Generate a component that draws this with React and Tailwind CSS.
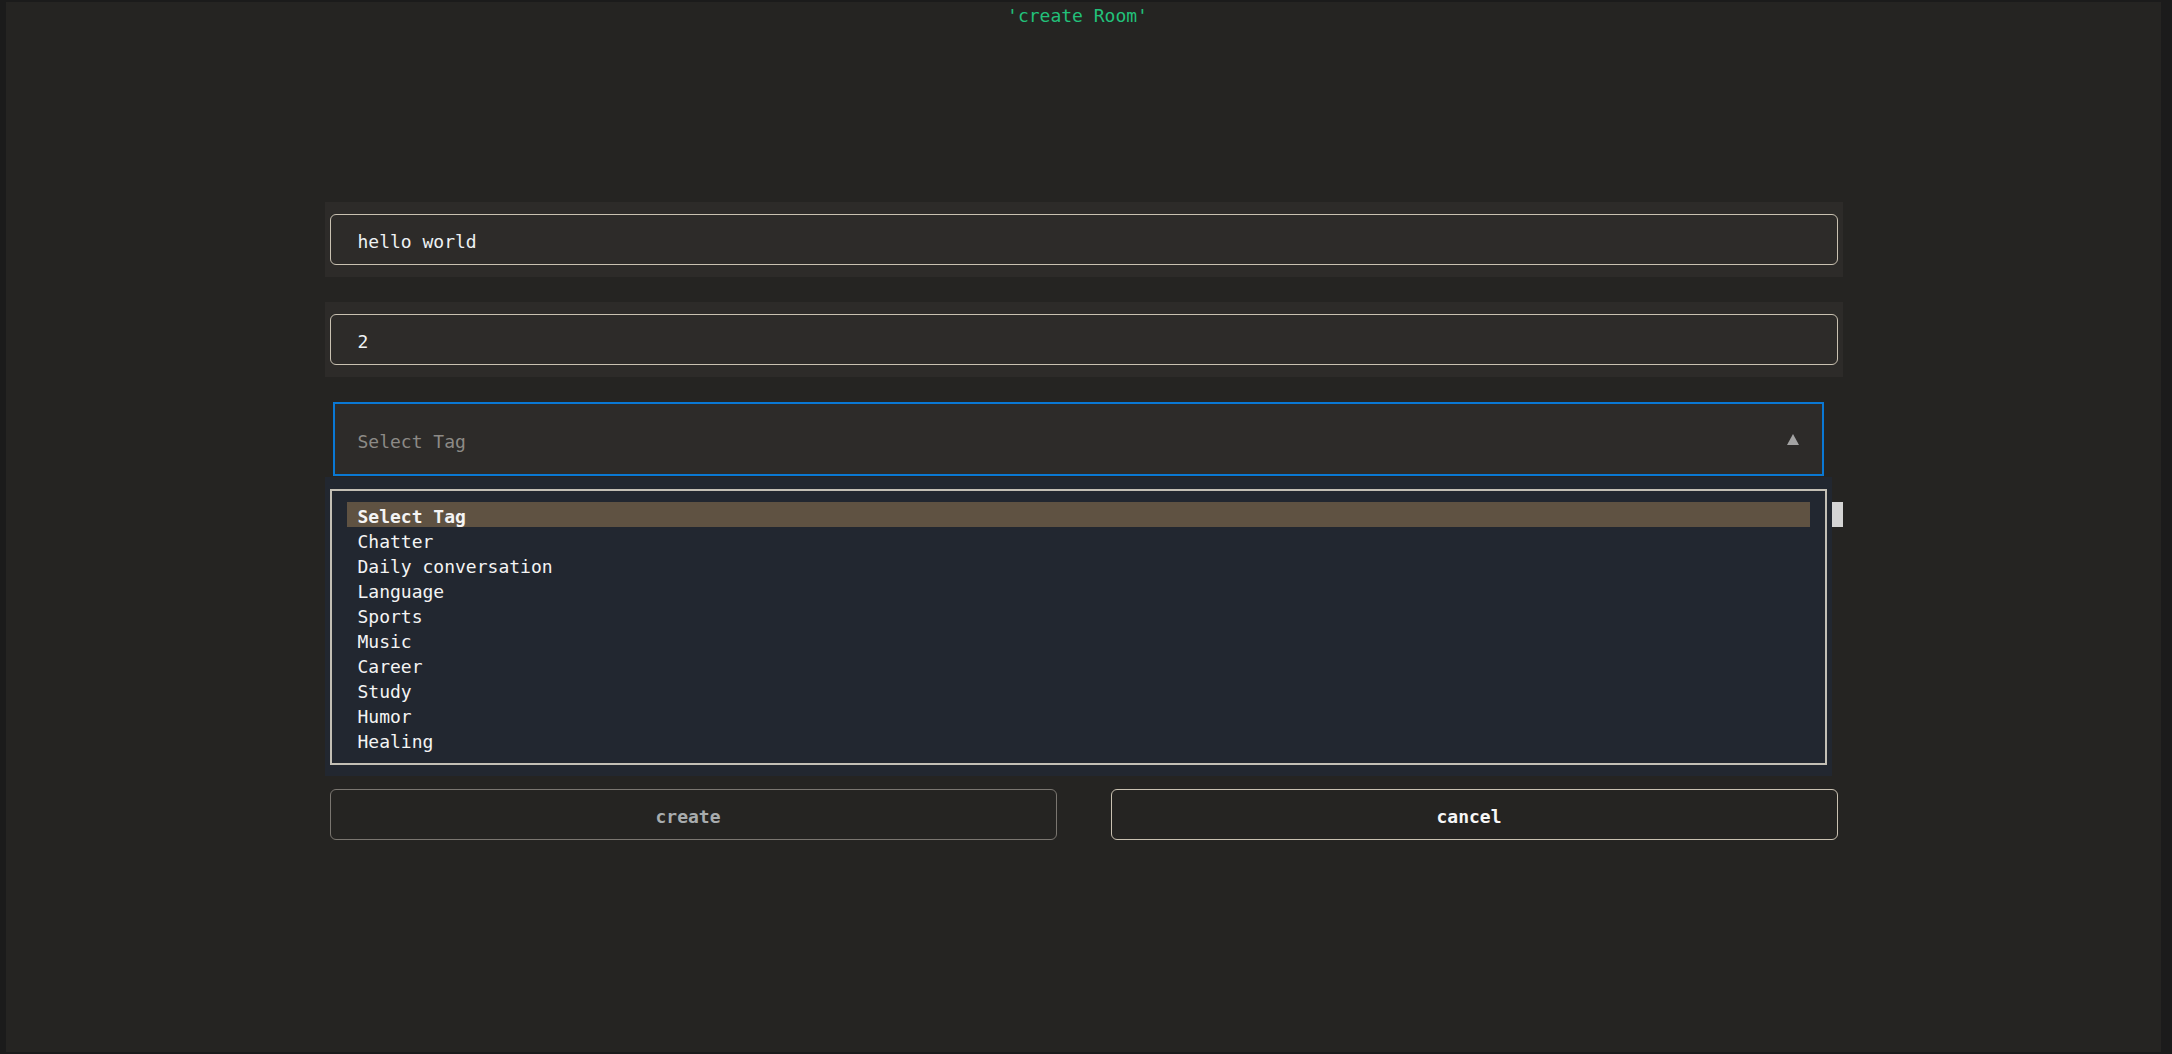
import React from 'react'

const tags = ['Select Tag', 'Chatter', 'Daily conversation', 'Language', 'Sports', 'Music', 'Career', 'Study', 'Humor', 'Healing']

const mono = { fontFamily: '"DejaVu Sans Mono", "Liberation Mono", monospace' }

function Field({ value }) {
  return (
    <div className="h-[75px] bg-[#2d2b29] px-[5px] pt-[12px]">
      <div className="h-[51px] rounded-[6px] border border-[#c9c1b1] bg-[#2d2b29] pl-[27px] pt-[3px] flex items-center text-[18px] text-[#eef2f4]">
        {value}
      </div>
    </div>
  )
}

export default function App() {
  return (
    <div className="h-[1054px] w-full bg-[#1b1b1b] pt-[2px] pl-[6px] pr-[11px] pb-[2px]" style={mono}>
      <div className="h-full bg-[#252422] flex flex-col items-center">
        <div className="pt-[4px] pr-[12px] text-[18px] leading-[20px] text-[#22c07a]">'create Room'</div>

        <div className="w-[1518px] mt-[176px] flex flex-col">
          <Field value="hello world" />
          <div className="h-[25px]" />
          <Field value="2" />

          {/* tag select, open */}
          <div className="mt-[25px] ml-[8px] w-[1491px] h-[74px] border-2 border-[#0a78d4] bg-[#2d2b29] flex items-center justify-between pl-[23px] pr-[23px]">
            <span className="text-[18px] text-[#8c8a86] pt-[4px]">Select Tag</span>
            <svg width="12" height="11" viewBox="0 0 12 11">
              <polygon points="6,0 12,11 0,11" fill="#a3a3a3" />
            </svg>
          </div>

          <div className="flex items-start mt-px">
            <div className="w-[1507px] bg-[#222730] pl-[5px] pr-[5px] pt-[12px] pb-[11px]">
              <div className="border-2 border-[#c3bfb5] pt-[11px] pb-[11px] px-[15px]">
                {tags.map((t, i) => (
                  <div
                    key={t}
                    className={
                      i === 0
                        ? 'h-[25px] flex items-center pl-[11px] pt-[3px] text-[18px] font-bold text-[#f4f4f4] bg-[#5f5242]'
                        : 'h-[25px] flex items-center pl-[11px] pt-[3px] text-[18px] text-[#f4f4f4]'
                    }
                  >
                    {t}
                  </div>
                ))}
              </div>
            </div>
            <div className="mt-[25px] w-[11px] h-[25px] bg-[#d4d4d4]" />
          </div>

          <div className="mt-[13px] px-[5px] flex justify-between">
            <button className="w-[727px] h-[51px] rounded-[6px] border border-[#7a7670] bg-transparent pr-[10px] pt-[3px] text-[18px] font-bold text-[#a8acae]">
              create
            </button>
            <button className="w-[727px] h-[51px] rounded-[6px] border border-[#c9c1b1] bg-transparent pr-[10px] pt-[3px] text-[18px] font-bold text-[#f6f6f6]">
              cancel
            </button>
          </div>
        </div>
      </div>
    </div>
  )
}
